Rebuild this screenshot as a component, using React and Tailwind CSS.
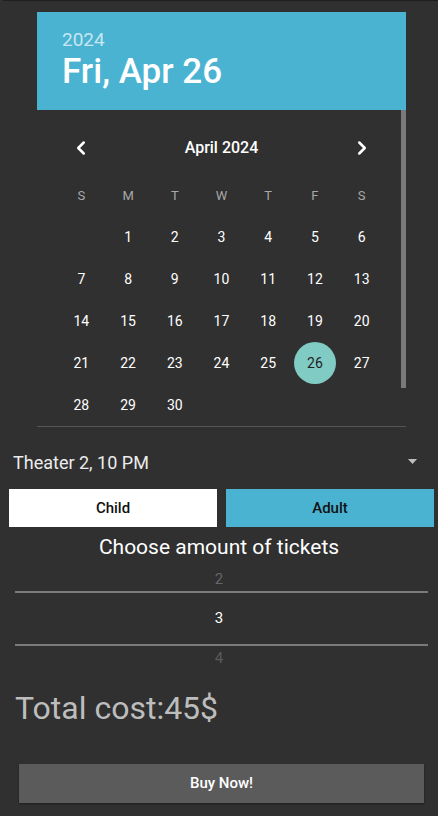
import React, { useState } from "react";
import { ChevronLeft, ChevronRight } from "lucide-react";

const weekDays = ["S", "M", "T", "W", "T", "F", "S"];

const buildWeeks = () => {
  // April 2024 starts on a Monday
  const cells = [null];
  for (let d = 1; d <= 30; d++) cells.push(d);
  while (cells.length % 7 !== 0) cells.push(null);
  const weeks = [];
  for (let i = 0; i < cells.length; i += 7) weeks.push(cells.slice(i, i + 7));
  return weeks;
};

const App = () => {
  const [selected, setSelected] = useState(26);
  const [ticketType, setTicketType] = useState("adult");
  const weeks = buildWeeks();

  return (
    <div
      className="h-[816px] w-full bg-[#303030] overflow-hidden"
      style={{ fontFamily: "Roboto, 'Noto Sans', sans-serif" }}
    >
      <div className="h-px ml-[3px] bg-[#1f1f1f]" />

      {/* date picker */}
      <div className="mx-[37px] mt-[11px] w-[369px]">
        <div className="h-[98px] bg-[#4bb3d2] pl-[25px] pt-[16px]">
          <div className="text-[19px] leading-[24px] text-white/70">2024</div>
          <div className="text-[35px] leading-[40px] font-medium text-white">
            Fri, Apr {selected}
          </div>
        </div>

        <div className="relative border-b border-[#555] pt-[18px]">
          <div className="absolute right-0 top-0 w-[5px] h-[278px] bg-[#7a7a7a]" />

          <div className="px-[21px]">
            <div className="grid grid-cols-7 h-[40px] items-center">
              <div className="flex justify-center text-white">
                <ChevronLeft size={22} strokeWidth={2.75} />
              </div>
              <div className="col-span-5 text-center text-[16px] font-medium text-white">
                April 2024
              </div>
              <div className="flex justify-center text-white">
                <ChevronRight size={22} strokeWidth={2.75} />
              </div>
            </div>

            <div className="grid grid-cols-7 mt-[8px] h-[40px] items-center">
              {weekDays.map((w, i) => (
                <div key={i} className="text-center text-[13px] text-[#a8a8a8]">
                  {w}
                </div>
              ))}
            </div>

            <div>
              {weeks.map((week, wi) => (
                <div key={wi} className="grid grid-cols-7 h-[42px] items-center">
                  {week.map((d, di) => (
                    <div key={di} className="flex justify-center">
                      {d && (
                        <button
                          onClick={() => setSelected(d)}
                          className={
                            d === selected
                              ? "w-[42px] h-[42px] rounded-full bg-[#80cbc4] text-[#1f1f1f] text-[14px]"
                              : "w-[42px] h-[42px] rounded-full text-white text-[14px]"
                          }
                        >
                          {d}
                        </button>
                      )}
                    </div>
                  ))}
                </div>
              ))}
            </div>
          </div>
        </div>
      </div>

      {/* spinner */}
      <div className="mt-[10px] h-[50px] flex items-center justify-between pl-[13px] pr-[21px]">
        <span className="text-[18px] text-[#ececec]">Theater 2, 10 PM</span>
        <svg width="9" height="6" viewBox="0 0 9 6">
          <polygon points="0,0 9,0 4.5,5" fill="#bdbdbd" />
        </svg>
      </div>

      {/* ticket type */}
      <div className="mt-[2px] flex gap-[9px] pl-[9px] pr-[4px] h-[38px]">
        <button
          onClick={() => setTicketType("child")}
          className="flex-1 bg-white text-[#111] text-[15px] font-medium"
        >
          Child
        </button>
        <button
          onClick={() => setTicketType("adult")}
          className="flex-1 bg-[#4bb3d2] text-[#111] text-[15px] font-medium"
        >
          Adult
        </button>
      </div>

      <div className="h-[41px] flex items-center justify-center text-[21px] text-white">
        Choose amount of tickets
      </div>

      {/* number picker */}
      <div className="flex flex-col">
        <div className="h-[23px] flex items-center justify-center text-[15px] text-[#666]">
          2
        </div>
        <div className="h-[2px] ml-[15px] mr-[10px] bg-[#7a7a7a]" />
        <div className="h-[51px] flex items-center justify-center text-[15px] text-white">
          3
        </div>
        <div className="h-[2px] ml-[15px] mr-[10px] bg-[#7a7a7a]" />
        <div className="h-[24px] flex items-center justify-center text-[15px] text-[#5a5a5a]">
          4
        </div>
      </div>

      <div className="mt-[18px] pl-[15px] text-[32px] leading-[40px] text-[#bdbdbd]">
        Total cost:45$
      </div>

      <div className="mt-[36px] pl-[19px] pr-[14px]">
        <button className="w-full h-[39px] bg-[#5b5b5b] text-white text-[15px] font-medium shadow-[0_1px_2px_rgba(0,0,0,0.4)]">
          Buy Now!
        </button>
      </div>
    </div>
  );
};

export default App;
